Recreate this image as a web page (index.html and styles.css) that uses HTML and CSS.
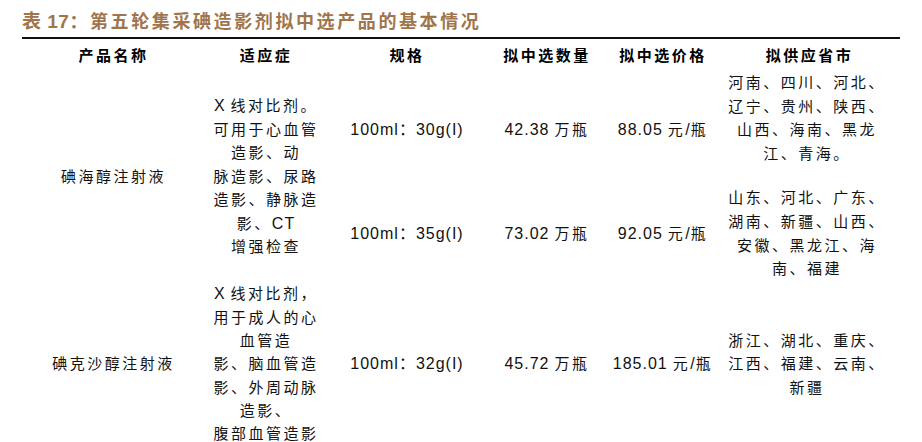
FILE: index.html
```html
<!DOCTYPE html>
<html lang="zh-CN">
<head>
<meta charset="utf-8">
<title>表 17</title>
<link rel="stylesheet" href="styles.css">
</head>
<body>
<div class="page">
  <h1 class="title"><span class="lat-t">表 17</span>：第五轮集采碘造影剂拟中选产品的基本情况</h1>
  <div class="table">
    <div class="th">产品名称</div>
    <div class="th">适应症</div>
    <div class="th">规格</div>
    <div class="th">拟中选数量</div>
    <div class="th">拟中选价格</div>
    <div class="th">拟供应省市</div>

    <div class="td name r1">碘海醇注射液</div>
    <div class="td ind r1"><p><span class="lat gap">X</span>线对比剂。<br>可用于心血管<br>造影、动<br>脉造影、尿路<br>造影、静脉造<br>影、<span class="lat">CT</span><br>增强检查</p></div>
    <div class="td spec r1a"><span class="lat">100ml：30g(I)</span></div>
    <div class="td qty r1a"><span class="lat gap">42.38</span>万瓶</div>
    <div class="td price r1a"><span class="lat gap">88.05</span>元<span class="lat">/</span>瓶</div>
    <div class="td prov r1a top"><p>河南、四川、河北、<br>辽宁、贵州、陕西、<br>山西、海南、黑龙<br>江、青海。</p></div>

    <div class="td spec r1b"><span class="lat">100ml：35g(I)</span></div>
    <div class="td qty r1b"><span class="lat gap">73.02</span>万瓶</div>
    <div class="td price r1b"><span class="lat gap">92.05</span>元<span class="lat">/</span>瓶</div>
    <div class="td prov r1b"><p>山东、河北、广东、<br>湖南、新疆、山西、<br>安徽、黑龙江、海<br>南、福建</p></div>

    <div class="td name r2">碘克沙醇注射液</div>
    <div class="td ind r2"><p><span class="lat gap">X</span>线对比剂，<br>用于成人的心<br>血管造<br>影、脑血管造<br>影、外周动脉<br>造影、<br>腹部血管造影</p></div>
    <div class="td spec r2"><span class="lat">100ml：32g(I)</span></div>
    <div class="td qty r2"><span class="lat gap">45.72</span>万瓶</div>
    <div class="td price r2"><span class="lat gap">185.01</span>元<span class="lat">/</span>瓶</div>
    <div class="td prov r2"><p>浙江、湖北、重庆、<br>江西、福建、云南、<br>新疆</p></div>
  </div>
</div>
</body>
</html>
```
FILE: styles.css
```css
* { box-sizing: border-box; }
html, body { margin: 0; padding: 0; background: #fff; }
body {
  font-family: "Liberation Sans", "Noto Sans CJK SC", sans-serif;
  color: #111;
  width: 922px;
  height: 442px;
  overflow: hidden;
}
.page {
  padding: 8px 0 0 22px;
}
.title {
  margin: 0;
  height: 24px;
  line-height: 24px;
  font-size: 18px;
  font-weight: 700;
  letter-spacing: 2.6px;
  color: #a0754b;
  font-family: "Noto Sans CJK SC", sans-serif;
}
.title .lat-t {
  font-family: "Liberation Sans", "Noto Sans CJK SC", sans-serif;
  font-size: 19px;
  letter-spacing: 0.5px;
}
.table {
  margin-top: 5px;
  width: 878px;
  border-top: 2px solid #111;
  display: grid;
  grid-template-columns: 183px 122px 160px 120px 112px 181px;
  grid-template-rows: 34px 114px 93px 168px;
}
.th, .td {
  display: flex;
  align-items: center;
  justify-content: center;
  text-align: center;
  font-size: 15px;
  letter-spacing: 2.5px;
  line-height: 23.6px;
  font-family: "Liberation Sans", "Noto Sans CJK SC", sans-serif;
}
.th { font-weight: 700; color: #000; }
.td p { margin: 0; }
.lat {
  font-size: 16px;
  letter-spacing: 1px;
}
.gap { margin-right: 5px; }
.name { grid-column: 1; }
.ind  { grid-column: 2; }
.spec { grid-column: 3; }
.qty  { grid-column: 4; }
.price { grid-column: 5; }
.prov { grid-column: 6; padding-right: 5px; }
.r1 { grid-row: 2 / 4; }
.r1a { grid-row: 2; }
.r1b { grid-row: 3; }
.r2 { grid-row: 4; line-height: 23.3px; }
.top { align-items: flex-start; margin-top: -2px; }
```
